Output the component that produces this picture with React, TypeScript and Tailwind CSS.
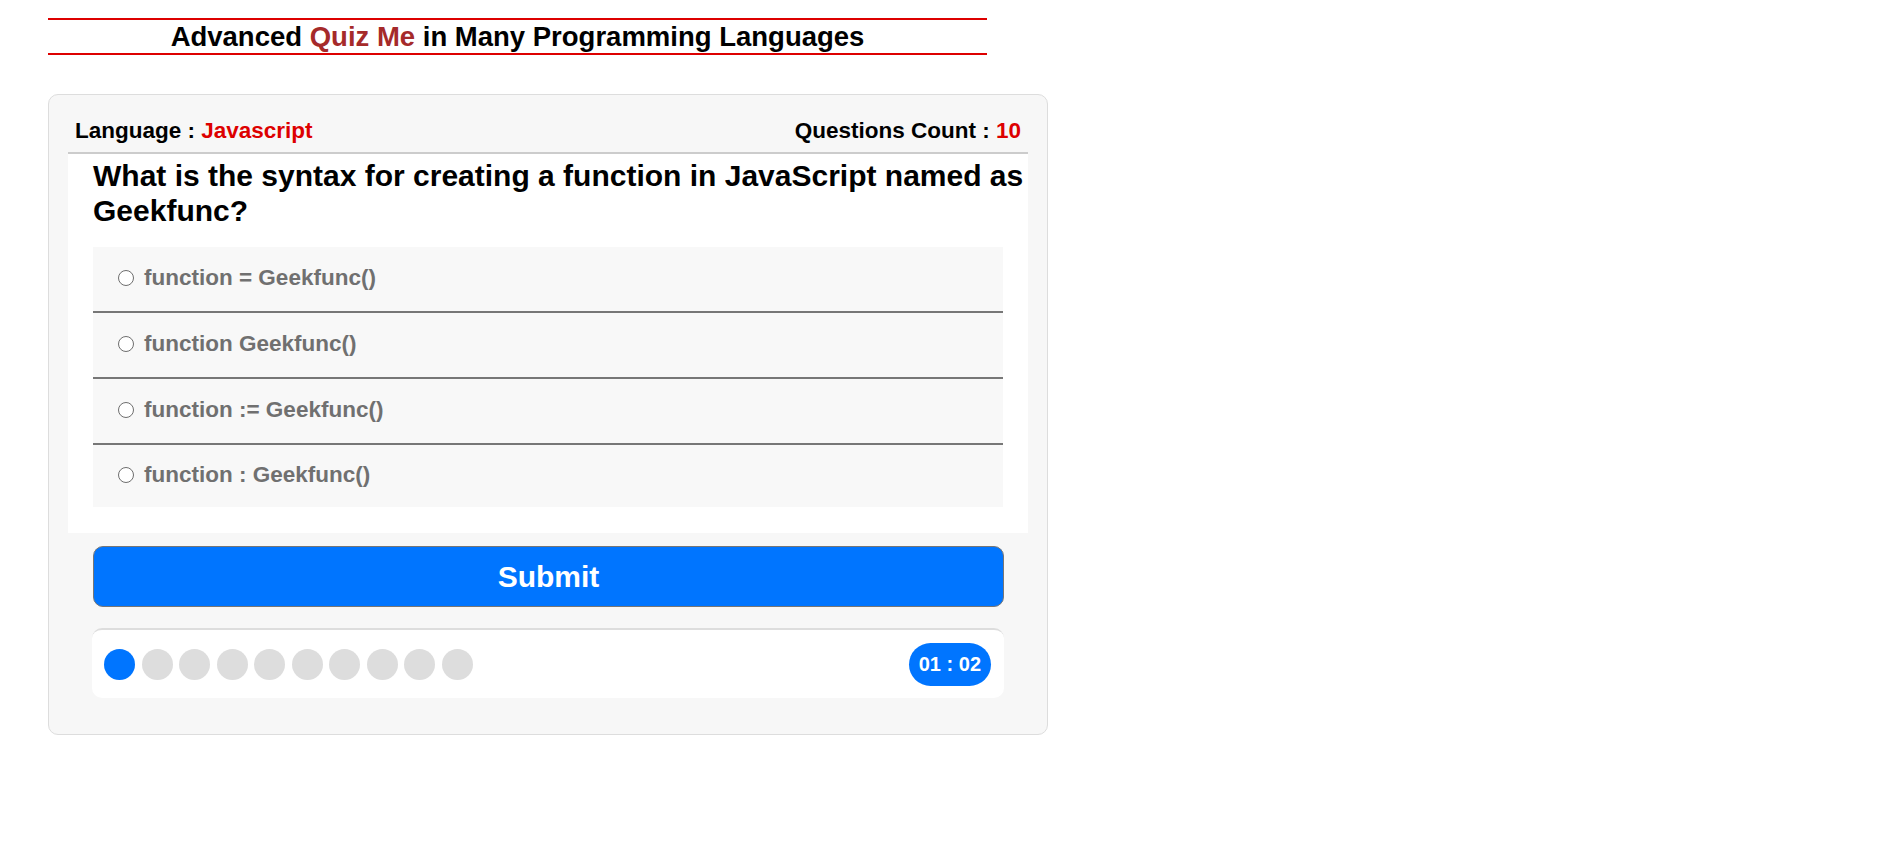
const options = [
  "function = Geekfunc()",
  "function Geekfunc()",
  "function := Geekfunc()",
  "function : Geekfunc()",
];

const TOTAL = 10;

export default function App() {
  return (
    <div className="min-h-[1130px] bg-white font-['Liberation_Sans',Arial,sans-serif] text-black">
      <div className="pt-[18px] pl-[48px]">
        <h1 className="w-[939px] border-y-2 border-[#dd0000] text-center text-[27.5px] leading-[33px] font-bold">
          Advanced <span className="text-[#a52a2a]">Quiz Me</span> in Many
          Programming Languages
        </h1>

        <div className="mt-[39px] w-[1000px] rounded-[10px] border border-[#dddddd] bg-[#f7f7f7] px-[19px] pt-[20px] pb-[36px]">
          {/* info row */}
          <div className="flex justify-between border-b-2 border-[#cccccc] px-[7px] pt-[3px] pb-[9px] text-[22.5px] leading-[25px] font-bold">
            <div>
              Language : <span className="text-[#dd0000]">Javascript</span>
            </div>
            <div>
              Questions Count : <span className="text-[#dd0000]">10</span>
            </div>
          </div>

          {/* question */}
          <div className="bg-white px-[25px] pt-[5px] pb-[26px]">
            <h2 className="mr-[-40px] text-[30px] leading-[34.5px] font-bold">
              What is the syntax for creating a function in JavaScript named as
              Geekfunc?
            </h2>
            <ul className="mt-[19px]">
              {options.map((opt, i) => (
                <li
                  key={opt}
                  className={
                    i === options.length - 1
                      ? "flex h-[62px] items-center gap-[10px] bg-[#f8f8f8] pl-[25px]"
                      : "flex h-[64px] box-content items-center gap-[10px] border-b-2 border-[#777777] bg-[#f8f8f8] pl-[25px]"
                  }
                >
                  <span className="mb-[2px] inline-block h-[16px] w-[16px] shrink-0 rounded-full border border-[#6e6e6e] bg-white" />
                  <span className="mb-[3px] text-[22.5px] font-bold text-[#707070]">
                    {opt}
                  </span>
                </li>
              ))}
            </ul>
          </div>

          <button className="mt-[13px] ml-[25px] block h-[61px] w-[911px] rounded-[10px] border border-[#767676] bg-[#0075ff] text-[30px] font-bold text-white">
            Submit
          </button>

          {/* progress */}
          <div className="mt-[21px] ml-[24px] flex h-[70px] w-[912px] items-center justify-between rounded-[10px] border-t-2 border-[#dddddd] bg-white pl-[12px] pr-[13px]">
            <div className="flex gap-[6.5px]">
              {Array.from({ length: TOTAL }).map((_, i) => (
                <span
                  key={i}
                  className={
                    i === 0
                      ? "h-[31px] w-[31px] rounded-full bg-[#0075ff]"
                      : "h-[31px] w-[31px] rounded-full bg-[#dddddd]"
                  }
                />
              ))}
            </div>
            <div className="rounded-full bg-[#0075ff] px-[10px] py-[10px] text-[20px] leading-[23px] font-bold text-white">
              01 : 02
            </div>
          </div>
        </div>
      </div>
    </div>
  );
}
